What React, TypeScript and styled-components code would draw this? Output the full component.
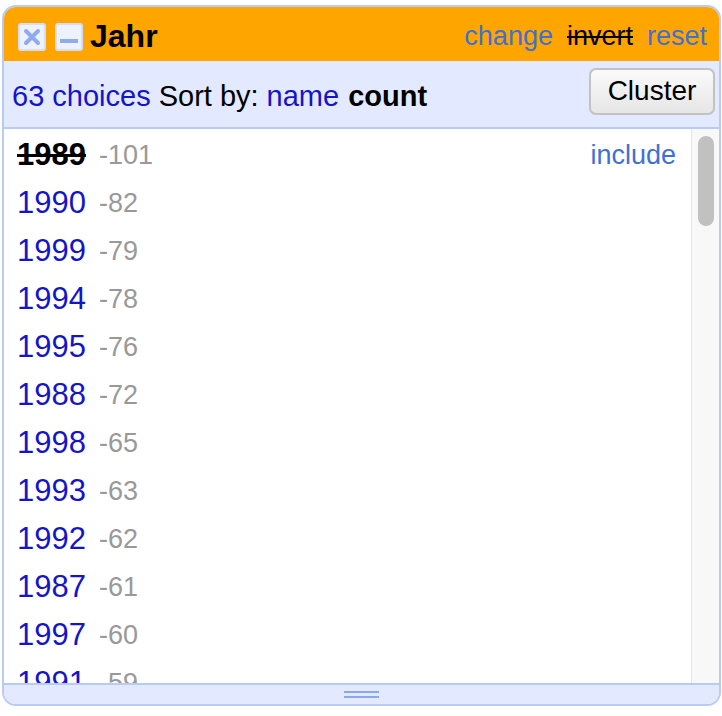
import styled, { createGlobalStyle } from "styled-components";

const GlobalStyle = createGlobalStyle`
  body {
    margin: 0;
    font-family: "Liberation Sans", Arial, sans-serif;
    background: #fff;
  }
`;

const Panel = styled.div`
  margin: 5px 0 0 2px;
  width: 719px;
  height: 701px;
  box-sizing: border-box;
  border: 2px solid #b8cbf7;
  border-radius: 14px;
  overflow: hidden;
  display: flex;
  flex-direction: column;
`;

const Header = styled.div`
  background: #ffa500;
  height: 54px;
  box-sizing: border-box;
  display: flex;
  align-items: center;
  padding: 5px 12px 0 14px;
  flex-shrink: 0;
`;

const IconBox = styled.div`
  width: 28px;
  height: 28px;
  box-sizing: border-box;
  border: 2px solid #d3defa;
  border-radius: 3px;
  background: #eef2fd;
  margin-right: 9px;
  display: flex;
  align-items: center;
  justify-content: center;
`;

const Title = styled.span`
  font-weight: bold;
  font-size: 32px;
  color: #000;
  flex: 1;
  margin-left: -2px;
`;

const HeadLink = styled.span<{ $off?: boolean }>`
  font-size: 27px;
  margin-left: 14px;
  color: ${(p) => (p.$off ? "#000" : "#3f70d6")};
  text-decoration: ${(p) => (p.$off ? "line-through" : "none")};
`;

const Controls = styled.div`
  background: #e3e9ff;
  height: 68px;
  box-sizing: border-box;
  border-bottom: 2px solid #b8cbf7;
  display: flex;
  align-items: center;
  padding: 5px 4px 0 8px;
  font-size: 29px;
  flex-shrink: 0;
`;

const Choices = styled.span`
  color: #1515c8;
  margin-right: 8px;
`;

const SortLabel = styled.span`
  color: #000;
  margin-right: 8px;
`;

const SortOpt = styled.span<{ $active?: boolean }>`
  color: ${(p) => (p.$active ? "#000" : "#1515c8")};
  font-weight: ${(p) => (p.$active ? "bold" : "normal")};
  margin-right: 9px;
`;

const ClusterButton = styled.button`
  margin-left: auto;
  width: 126px;
  height: 47px;
  margin-top: -11px;
  font-family: inherit;
  font-size: 28px;
  color: #000;
  border: 2px solid #c2c2c2;
  border-radius: 7px;
  background: linear-gradient(#fafafa, #e6e6e6);
`;

const ListArea = styled.div`
  flex: 1;
  min-height: 0;
  display: flex;
  background: #fff;
`;

const Items = styled.div`
  flex: 1;
  overflow: hidden;
  padding-top: 2px;
`;

const ScrollTrack = styled.div`
  width: 28px;
  box-sizing: border-box;
  background: #f8f8f8;
  border-left: 1px solid #e6e6e6;
  padding: 7px 5px 0 6px;
`;

const Thumb = styled.div`
  height: 90px;
  border-radius: 8px;
  background: #c1c1c1;
`;

const Row = styled.div`
  height: 48px;
  display: flex;
  align-items: center;
  padding: 0 15px 0 13px;
`;

const Name = styled.span<{ $excluded?: boolean }>`
  font-size: 31px;
  color: ${(p) => (p.$excluded ? "#000" : "#1515c8")};
  font-weight: ${(p) => (p.$excluded ? "bold" : "normal")};
  text-decoration: ${(p) => (p.$excluded ? "line-through" : "none")};
`;

const Count = styled.span`
  font-size: 27px;
  color: #999;
  margin-left: 13px;
`;

const Include = styled.span`
  margin-left: auto;
  font-size: 27px;
  color: #3f70d6;
`;

const Footer = styled.div`
  height: 19px;
  background: #e3e9ff;
  border-top: 2px solid #b8cbf7;
  display: flex;
  align-items: center;
  justify-content: center;
  flex-shrink: 0;
`;

const Grip = styled.div`
  width: 35px;
  height: 7px;
  box-sizing: border-box;
  border-top: 2px solid #8aa8ee;
  border-bottom: 2px solid #8aa8ee;
`;

// the rows that fit in the visible part of the list
const items: [string, number][] = [
  ["1989", 101], ["1990", 82], ["1999", 79], ["1994", 78], ["1995", 76],
  ["1988", 72], ["1998", 65], ["1993", 63], ["1992", 62], ["1987", 61],
  ["1997", 60], ["1991", 59],
];

export default function App() {
  return (
    <>
      <GlobalStyle />
      <Panel>
        <Header>
          <IconBox>
            <svg width="18" height="18" viewBox="0 0 18 18">
              <path d="M3 3 L15 15 M15 3 L3 15" stroke="#8fabee" strokeWidth="4" strokeLinecap="round" />
            </svg>
          </IconBox>
          <IconBox>
            <svg width="20" height="18" viewBox="0 0 20 18">
              <rect x="1" y="11" width="18" height="4" fill="#8fabee" />
            </svg>
          </IconBox>
          <Title>Jahr</Title>
          <HeadLink>change</HeadLink>
          <HeadLink $off>invert</HeadLink>
          <HeadLink>reset</HeadLink>
        </Header>
        <Controls>
          <Choices>63 choices</Choices>
          <SortLabel>Sort by:</SortLabel>
          <SortOpt>name</SortOpt>
          <SortOpt $active>count</SortOpt>
          <ClusterButton>Cluster</ClusterButton>
        </Controls>
        <ListArea>
          <Items>
            {items.map(([name, count], i) => (
              <Row key={name}>
                <Name $excluded={i === 0}>{name}</Name>
                <Count>-{count}</Count>
                {i === 0 && <Include>include</Include>}
              </Row>
            ))}
          </Items>
          <ScrollTrack>
            <Thumb />
          </ScrollTrack>
        </ListArea>
        <Footer>
          <Grip />
        </Footer>
      </Panel>
    </>
  );
}
